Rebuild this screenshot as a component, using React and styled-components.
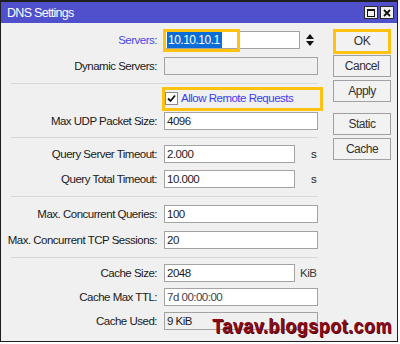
import React from 'react'
import styled, { createGlobalStyle } from 'styled-components'

const GlobalStyle = createGlobalStyle`
  html, body {
    margin: 0;
    padding: 0;
    background: #ffffff;
  }
  body {
    font-family: "Liberation Sans", Arial, sans-serif;
    font-size: 11.5px;
    letter-spacing: -0.5px;
    color: #1a1a1a;
  }
`

const Window = styled.div`
  position: relative;
  width: 398px;
  height: 342px;
  box-sizing: border-box;
  border: 1px solid #1e1e1e;
  border-top-width: 2px;
  background: #f0f0f0;
  display: flex;
  flex-direction: column;
`

const TitleBar = styled.div`
  height: 21px;
  flex: none;
  background: #5050cc;
  display: flex;
  align-items: center;
  padding: 0 3px 0 6px;
  color: #ffffff;
  font-size: 12.5px;
  letter-spacing: -0.7px;
`

const Title = styled.div`
  flex: 1;
`

const TitleButtons = styled.div`
  display: flex;
  gap: 2px;
`

const TitleButton = styled.div`
  width: 14px;
  height: 13px;
  box-sizing: border-box;
  border: 1px solid #2a2a2a;
  background: #f0f0f0;
  display: flex;
  align-items: center;
  justify-content: center;
`

const Body = styled.div`
  flex: 1;
  display: flex;
  gap: 14px;
`

const Form = styled.div`
  width: 318px;
  display: flex;
  flex-direction: column;
`

const Section = styled.div`
  display: flex;
  flex-direction: column;
  gap: ${p => p.$gap}px;
  padding: ${p => p.$top}px 0 ${p => p.$bottom}px;
`

const Divider = styled.div`
  height: 1px;
  margin-left: 10px;
  margin-right: 1px;
  background: #d9d9d9;
`

const Row = styled.div`
  display: grid;
  grid-template-columns: 156px auto;
  column-gap: 7px;
  align-items: center;
  height: ${p => p.$h || 18}px;
`

const Label = styled.div`
  text-align: right;
  white-space: nowrap;
  color: ${p => (p.$accent ? '#4646e6' : '#1a1a1a')};
`

const Cell = styled.div`
  display: flex;
  align-items: center;
`

const Field = styled.div`
  position: relative;
  width: ${p => p.$w}px;
  height: 18px;
  box-sizing: border-box;
  border: 1px solid #a3a3a3;
  background: ${p => (p.$disabled ? '#f0f0f0' : '#ffffff')};
  color: ${p => p.$color || '#1a1a1a'};
  padding-left: 2px;
  line-height: 16px;
  white-space: nowrap;
`

const Selected = styled.span`
  display: inline-block;
  background: #0a6cd6;
  color: #ffffff;
  font-size: 12px;
  line-height: 16px;
  padding: 0 2px 0 1px;
`

const Unit = styled.div`
  margin-left: ${p => p.$gap}px;
  color: ${p => p.$color || '#1a1a1a'};
`

const Spinner = styled.svg`
  margin-left: 6px;
`

const CheckLine = styled.div`
  position: relative;
  display: flex;
  align-items: center;
  gap: 3px;
  color: #3c3cf0;
  margin-left: 1px;
`

const Box = styled.div`
  width: 13px;
  height: 13px;
  box-sizing: border-box;
  border: 1px solid #8a8a8a;
  background: #ffffff;
  display: flex;
  align-items: center;
  justify-content: center;
`

const Buttons = styled.div`
  width: 58px;
  padding-top: 7px;
  display: flex;
  flex-direction: column;
  gap: 3px;
`

const Button = styled.div`
  position: relative;
  height: 22px;
  box-sizing: border-box;
  border: 1px solid #a0a0a0;
  border-left-color: ${p => (p.$focus ? '#202020' : '#a0a0a0')};
  background: #f2f2f2;
  color: #333333;
  font-size: 12px;
  display: flex;
  align-items: center;
  justify-content: center;
  margin-top: ${p => p.$space || 0}px;
`

const Highlight = styled.div`
  position: absolute;
  left: ${p => p.$l}px;
  top: ${p => p.$t}px;
  width: ${p => p.$w}px;
  height: ${p => p.$h}px;
  box-sizing: border-box;
  border: 3px solid #ffc20e;
  pointer-events: none;
`

const Watermark = styled.div`
  position: absolute;
  right: 5px;
  bottom: 3px;
  font-family: "Liberation Sans", Arial, sans-serif;
  font-weight: 700;
  font-size: 21px;
  letter-spacing: 0.5px;
  color: #8a0a16;
  text-shadow: 1px 1px 0 #4a0008;
  transform: scaleX(0.86);
  transform-origin: right center;
`

const SpinIcon = () => (
  <Spinner width="8" height="12" viewBox="0 0 8 12">
    <path d="M0 5 L4 0 L8 5 Z M0 7 L8 7 L4 12 Z" fill="#111" />
  </Spinner>
)

const Check = () => (
  <svg width="9" height="9" viewBox="0 0 9 9">
    <path d="M1 4.5 L3.5 7 L8 1.5" stroke="#111" strokeWidth="1.8" fill="none" />
  </svg>
)

const FieldRow = ({ label, value, w = 154, unit, unitGap, unitColor, disabled, color }) => (
  <Row>
    <Label>{label}</Label>
    <Cell>
      <Field $w={w} $disabled={disabled} $color={color}>{value}</Field>
      {unit && <Unit $gap={unitGap} $color={unitColor}>{unit}</Unit>}
    </Cell>
  </Row>
)

export default function App() {
  return (
    <>
      <GlobalStyle />
      <Window>
        <TitleBar>
          <Title>DNS Settings</Title>
          <TitleButtons>
            <TitleButton>
              <svg width="8" height="8" viewBox="0 0 8 8">
                <rect x="0.5" y="0.5" width="7" height="7" fill="none" stroke="#111" />
                <rect x="0" y="0" width="8" height="2" fill="#111" />
              </svg>
            </TitleButton>
            <TitleButton>
              <svg width="8" height="8" viewBox="0 0 8 8">
                <path d="M1 1 L7 7 M7 1 L1 7" stroke="#111" strokeWidth="1.8" />
              </svg>
            </TitleButton>
          </TitleButtons>
        </TitleBar>
        <Body>
          <Form>
            <Section $top={8} $bottom={8} $gap={8}>
              <Row>
                <Label $accent>Servers:</Label>
                <Cell>
                  <Field $w={136}>
                    <Selected>10.10.10.1</Selected>
                    <Highlight $l={-2} $t={-3} $w={77} $h={23} />
                  </Field>
                  <SpinIcon />
                </Cell>
              </Row>
              <FieldRow label="Dynamic Servers:" value="" disabled />
            </Section>
            <Divider />
            <Section $top={6} $bottom={7} $gap={6}>
              <Row $h={16}>
                <span />
                <CheckLine>
                  <Box><Check /></Box>
                  Allow Remote Requests
                  <Highlight $l={-3} $t={-5} $w={161} $h={24} />
                </CheckLine>
              </Row>
              <FieldRow label="Max UDP Packet Size:" value="4096" />
            </Section>
            <Divider />
            <Section $top={7} $bottom={8} $gap={7}>
              <FieldRow label="Query Server Timeout:" value="2.000" w={131} unit="s" unitGap={16} />
              <FieldRow label="Query Total Timeout:" value="10.000" w={131} unit="s" unitGap={16} />
            </Section>
            <Divider />
            <Section $top={8} $bottom={8} $gap={8}>
              <FieldRow label="Max. Concurrent Queries:" value="100" />
              <FieldRow label="Max. Concurrent TCP Sessions:" value="20" />
            </Section>
            <Divider />
            <Section $top={6} $bottom={0} $gap={6}>
              <FieldRow label="Cache Size:" value="2048" w={131} unit="KiB" unitGap={5} unitColor="#3a3a3a" />
              <FieldRow label="Cache Max TTL:" value="7d 00:00:00" color="#3d4250" />
              <FieldRow label="Cache Used:" value="9 KiB" disabled />
            </Section>
          </Form>
          <Buttons>
            <Button $focus>
              OK
              <Highlight $l={-1} $t={-2} $w={58} $h={25} />
            </Button>
            <Button>Cancel</Button>
            <Button>Apply</Button>
            <Button $space={8}>Static</Button>
            <Button>Cache</Button>
          </Buttons>
        </Body>
        <Watermark>Tavav.blogspot.com</Watermark>
      </Window>
    </>
  )
}
